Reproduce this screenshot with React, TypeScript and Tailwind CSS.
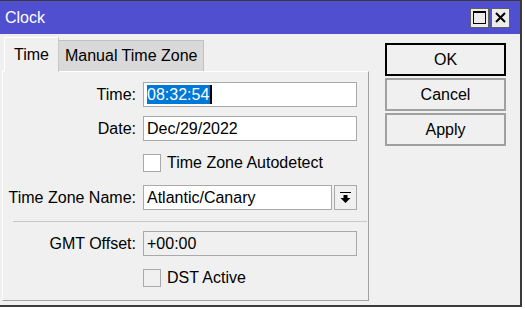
import React from 'react';

const font = { fontFamily: '"Liberation Sans", Arial, sans-serif' };

function Field({ label, value, selected, readOnly }: { label: string; value: string; selected?: boolean; readOnly?: boolean }) {
  return (
    <div className="flex items-center h-[25px]">
      <div className="w-[140px] pr-[7px] text-right whitespace-nowrap">{label}</div>
      <div className={`w-[214px] h-[25px] border border-[#a9a9a9] flex items-center px-[3px] ${readOnly ? 'bg-[#f0f0f0]' : 'bg-white'}`}>
        {selected ? (
          <span className="bg-[#0078d7] text-white pr-[1px] border-r-2 border-black leading-[19px]">{value}</span>
        ) : (
          <span>{value}</span>
        )}
      </div>
    </div>
  );
}

function Check({ label, disabled }: { label: string; disabled?: boolean }) {
  return (
    <div className="flex items-center h-[18px] pl-[140px]">
      <div className={`w-[18px] h-[18px] border border-[#a9a9a9] ${disabled ? 'bg-[#f0f0f0]' : 'bg-white'}`} />
      <span className="ml-[6px]">{label}</span>
    </div>
  );
}

function Btn({ label, primary }: { label: string; primary?: boolean }) {
  return (
    <div
      className={`w-[121px] h-[33px] flex items-center justify-center bg-[#f0f0f0] ${
        primary ? 'border-2 border-black' : 'border-2 border-[#a0a0a0]'
      }`}
    >
      {label}
    </div>
  );
}

export default function App() {
  return (
    <div className="w-[525px] h-[310px] bg-white text-[16px] text-black" style={font}>
      <div className="w-[522px] h-[307px] border-t border-r-2 border-b-2 border-[#3a3a3a] bg-[#f0f0f0] flex flex-col">
        {/* title bar */}
        <div className="h-[33px] bg-[#4f4fcf] flex items-center justify-between pl-[5px] pr-[10px]">
          <span className="text-white text-[16px]">Clock</span>
          <div className="flex gap-[2px]">
            <div className="w-[19px] h-[20px] bg-[#ececec] border border-[#606060] flex items-center justify-center">
              <div className="w-[13px] h-[13px] border border-black border-t-2" />
            </div>
            <div className="w-[19px] h-[20px] bg-[#ececec] border border-[#606060] flex items-center justify-center">
              <svg width="11" height="11" viewBox="0 0 11 11">
                <path d="M1 1 L10 10 M10 1 L1 10" stroke="#000" strokeWidth="2" />
              </svg>
            </div>
          </div>
        </div>

        <div className="flex flex-1 pl-[2px]">
          {/* left: tabs + panel */}
          <div className="flex flex-col w-[367px]">
            <div className="flex items-end h-[37px] pl-[2px]">
              <div className="h-[35px] px-[9px] flex items-center bg-[#f0f0f0] border-t border-l border-white border-r border-r-[#c8c8c8] relative top-[1px]">
                Time
              </div>
              <div className="h-[31px] px-[6px] flex items-center bg-[#d9d9d9] border-t border-r border-[#c2c2c2]">
                Manual Time Zone
              </div>
            </div>
            <div className="flex-1 mb-[4px] border-l border-t border-white border-r border-b border-r-[#a0a0a0] border-b-[#a0a0a0] pt-[10px] flex flex-col">
              <Field label="Time:" value="08:32:54" selected />
              <div className="h-[9px]" />
              <Field label="Date:" value="Dec/29/2022" />
              <div className="h-[13px]" />
              <Check label="Time Zone Autodetect" />
              <div className="h-[13px]" />
              <div className="flex items-center h-[25px]">
                <div className="w-[140px] pr-[7px] text-right whitespace-nowrap">Time Zone Name:</div>
                <div className="w-[189px] h-[25px] border border-[#a9a9a9] bg-white flex items-center px-[3px]">Atlantic/Canary</div>
                <div className="ml-[2px] w-[23px] h-[25px] border border-[#a9a9a9] bg-[#f0f0f0] flex items-center justify-center">
                  <svg width="11" height="12" viewBox="0 0 11 12">
                    <path d="M0 0.5 H11" stroke="#000" strokeWidth="1" />
                    <path d="M3.5 3 H7.5 V6 H10.5 L5.5 11 L0.5 6 H3.5 Z" fill="#000" />
                  </svg>
                </div>
              </div>
              <div className="h-[11px]" />
              <div className="ml-[10px] mr-[1px] h-px bg-[#c8c8c8]" />
              <div className="h-[9px]" />
              <Field label="GMT Offset:" value="+00:00" readOnly />
              <div className="h-[13px]" />
              <Check label="DST Active" disabled />
            </div>
          </div>

          {/* right: buttons */}
          <div className="flex flex-col gap-[2px] pt-[9px] pl-[16px]">
            <Btn label="OK" primary />
            <Btn label="Cancel" />
            <Btn label="Apply" />
          </div>
        </div>
      </div>
    </div>
  );
}
